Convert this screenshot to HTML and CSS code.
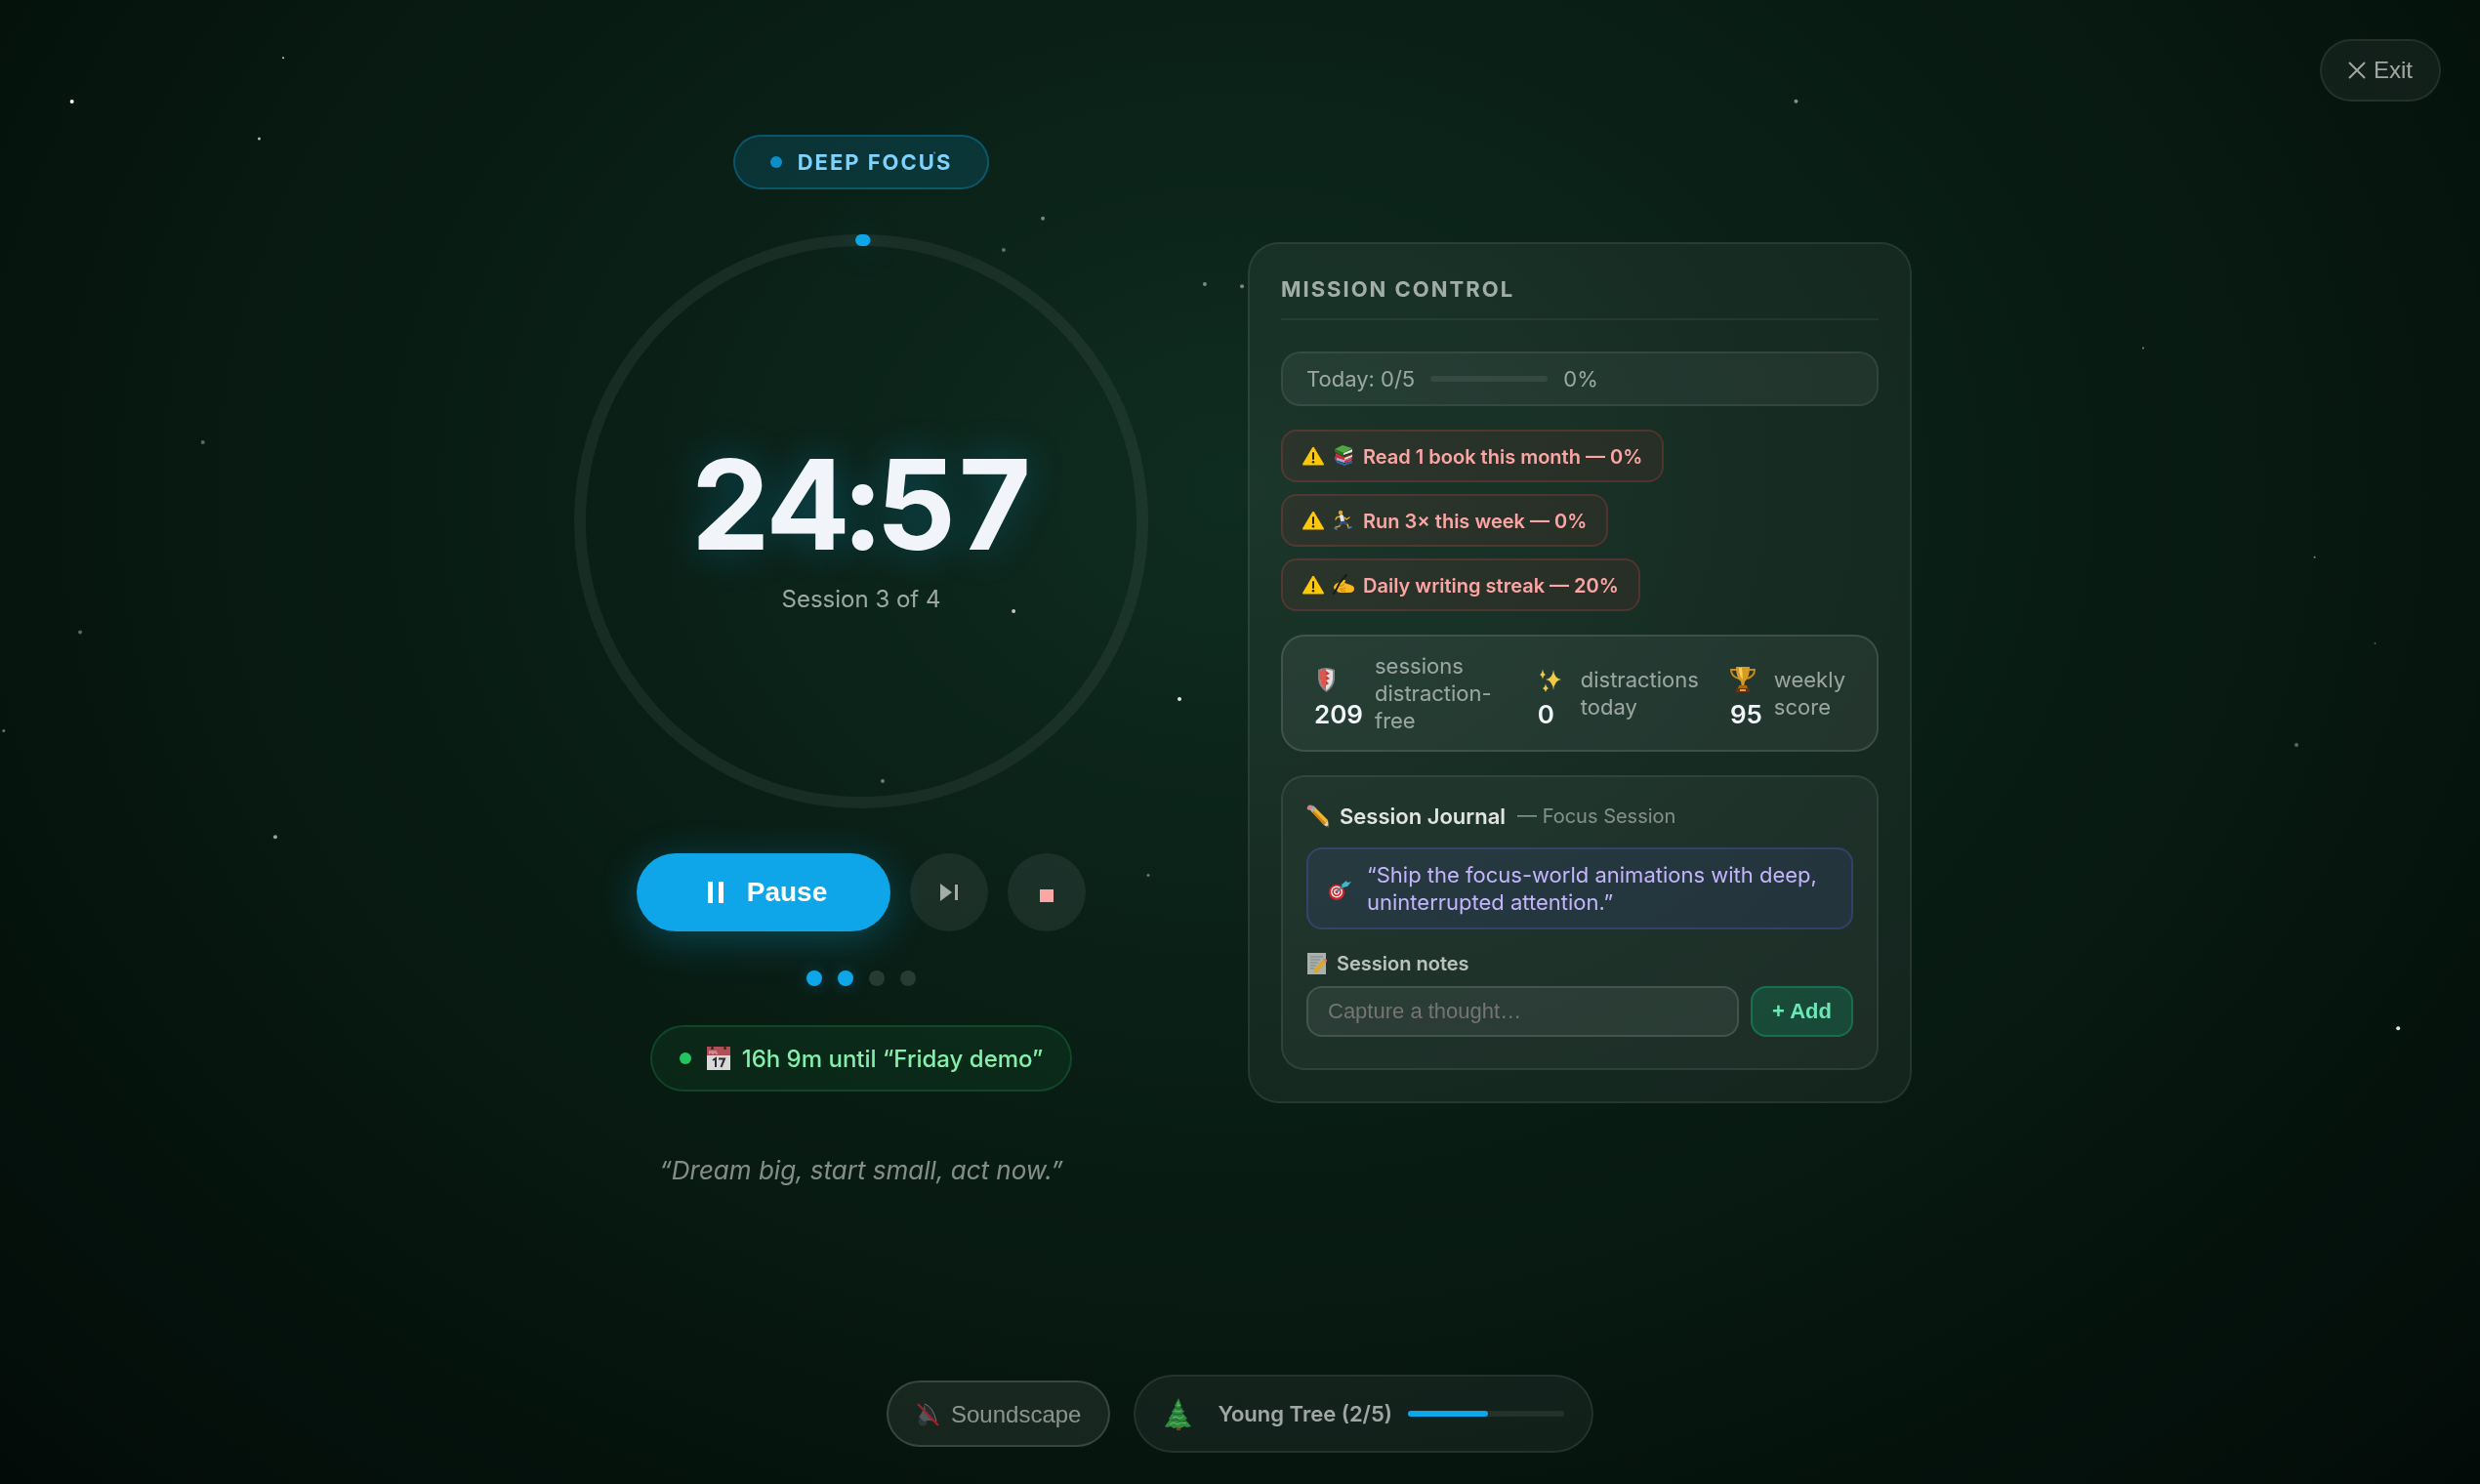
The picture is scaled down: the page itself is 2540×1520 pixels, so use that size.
FILE: index.html
```html
<!DOCTYPE html>
<html lang="en">
<head>
<meta charset="UTF-8" />
<meta name="viewport" content="width=device-width, initial-scale=1.0">
<title>Deep Focus</title>
<link rel="stylesheet" href="styles.css">
</head>
<body>

<svg class="stars" aria-hidden="true">
  <g fill="#fff">
    <circle cx="2.9%" cy="6.85%" r="2" />
    <circle cx="11.42%" cy="3.9%" r="1" opacity=".8" />
    <circle cx="10.45%" cy="9.35%" r="1.5" opacity=".7" />
    <circle cx="8.18%" cy="29.8%" r="2" opacity=".35" />
    <circle cx="3.23%" cy="42.6%" r="2" opacity=".35" />
    <circle cx=".15%" cy="49.25%" r="1.5" opacity=".4" />
    <circle cx="11.1%" cy="56.4%" r="2" opacity=".6" />
    <circle cx="37.68%" cy="10.3%" r="1" opacity=".5" />
    <circle cx="42.05%" cy="14.72%" r="2" opacity=".45" />
    <circle cx="40.47%" cy="16.85%" r="2" opacity=".35" />
    <circle cx="48.58%" cy="19.15%" r="2" opacity=".45" />
    <circle cx="50.08%" cy="19.3%" r="2" opacity=".45" />
    <circle cx="72.42%" cy="6.83%" r="2" opacity=".5" />
    <circle cx="86.42%" cy="23.45%" r="1" opacity=".5" />
    <circle cx="93.33%" cy="37.55%" r="1" opacity=".5" />
    <circle cx="95.77%" cy="43.35%" r="1" opacity=".3" />
    <circle cx="92.6%" cy="50.2%" r="2" opacity=".35" />
    <circle cx="96.7%" cy="69.3%" r="2" opacity=".9" />
    <circle cx="47.56%" cy="47.1%" r="2" opacity=".9" />
    <circle cx="40.87%" cy="41.18%" r="2" opacity=".75" />
    <circle cx="35.59%" cy="52.63%" r="2" opacity=".4" />
    <circle cx="46.3%" cy="58.98%" r="1.5" opacity=".4" />
  </g>
</svg>

<button class="exit-btn" type="button">
  <svg width="18" height="18" viewBox="0 0 18 18" fill="none" stroke="currentColor" stroke-width="2" aria-hidden="true"><path d="M1 1l16 16M17 1L1 17" /></svg>
  Exit
</button>

<div class="world">
  <main class="stage">
    <section class="timer">
      <div class="mode"><span class="mode-dot"></span>DEEP FOCUS</div>

      <div class="ring">
        <svg class="ring-svg" viewBox="0 0 600 600" fill="none" stroke-width="12" aria-hidden="true">
          <circle class="ring-track" cx="300" cy="300" r="288" />
          <circle class="ring-value" cx="300" cy="300" r="288" stroke-linecap="round" stroke-dasharray="3.6 1900" transform="rotate(-90 300 300)" />
        </svg>
        <div class="ring-text">
          <div class="time">24:57</div>
          <div class="session">Session 3 of 4</div>
        </div>
      </div>

      <div class="controls">
        <button class="pause-btn" type="button">
          <svg width="16" height="22" viewBox="0 0 16 22" fill="currentColor" aria-hidden="true"><path d="M0 0h5v22H0zM11 0h5v22h-5z" /></svg>
          Pause
        </button>
        <button class="round-btn" type="button" aria-label="Skip">
          <svg width="20" height="18" viewBox="0 0 20 18" fill="currentColor" aria-hidden="true"><path d="M1 0l12 9-12 9zM16 1h3v16h-3z" /></svg>
        </button>
        <button class="round-btn stop" type="button" aria-label="Stop">
          <svg width="14" height="20" viewBox="0 0 14 20" fill="currentColor" aria-hidden="true"><path d="M0 7h14v13H0z" /></svg>
        </button>
      </div>

      <div class="dots">
        <span class="dot done"></span><span class="dot done"></span><span class="dot"></span><span class="dot"></span>
      </div>

      <div class="event">
        <span class="event-dot"></span>
        <svg width="24" height="24" viewBox="0 0 24 24" aria-hidden="true">
          <path fill="#d9d9da" d="M0 9h24v15H0z" /><path fill="#b04f57" d="M0 0h24v9H0z" />
          <circle cx="5.500" cy="1.500" r="1.500" fill="#3a2425" /><circle cx="18.500" cy="1.500" r="1.500" fill="#3a2425" />
          <path d="M2 7h1V4M5 4v3h2V4M9 4v3h2" stroke="#e9b5b8" fill="none" />
          <path d="M6 14l3-2v9M12 12.500h6l-3.500 8.500" stroke="#2b2d31" stroke-width="2" fill="none" />
        </svg>
        <span class="event-text">16h 9m until “Friday demo”</span>
      </div>

      <p class="motto">“Dream big, start small, act now.”</p>
    </section>

    <section class="panel">
      <h2 class="panel-title">MISSION CONTROL</h2>

      <div class="today">
        <span>Today: 0/5</span>
        <span class="today-bar"></span>
        <span>0%</span>
      </div>

      <ul class="goals">
        <li class="goal">
          <svg width="22" height="22" viewBox="0 0 22 22" aria-hidden="true"><g id="warn"><path fill="#fdc80c" d="M10 2.500q1-1.500 2 0l9.800 16.500q.5 1.500-1 1.500H1.200q-1.500 0-1-1.500z" /><path stroke="#2d2410" stroke-width="2" stroke-linecap="round" d="M11 8v6" /><circle cx="11" cy="17.300" r="1.300" fill="#2d2410" /></g></svg>
          <svg width="22" height="22" viewBox="0 0 22 22" aria-hidden="true">
            <path fill="#3263a5" d="M3 15l9 4 8-3v2l-8 3-8-3z" />
            <path fill="#b9a7c8" d="M2 12l10 3 7-2v3l-7 2-9-3z" /><path fill="#7d4b9a" d="M2 11l2 1v4l-2-1z" />
            <path fill="#c62f35" d="M3 8l9 4 8-3v1l-8 3v2l-9-3z" /><path fill="#ecdedd" d="M12 13l8-3v2l-8 3z" /><path fill="#c62f35" d="M12 16l8-3v2l-8 3z" />
            <path fill="#dbe3d3" d="M11 8l9-4v3l-9 3z" /><path fill="#4fa83f" d="M2 4l8-4 10 3-9 5z" /><path fill="#287625" d="M2 4l9 4v3L2 7z" />
          </svg>
          <span class="goal-text">Read 1 book this month — 0%</span>
        </li>
        <li class="goal">
          <svg width="22" height="22" viewBox="0 0 22 22" aria-hidden="true"><use href="#warn" /></svg>
          <svg width="22" height="22" viewBox="0 0 22 22" fill="none" stroke-linecap="round" stroke-linejoin="round" aria-hidden="true">
            <path stroke="#e9a921" stroke-width="1.500" d="M7 7L4 8l-1 2M12 8l2 2 3-2M11 13l4 2 1 3" />
            <path stroke="#d79a20" stroke-width="1.500" d="M8 14l-1 3-4 1" />
            <circle cx="8" cy="3" r="2.200" fill="#e5a71f" />
            <path stroke="#dfe3ea" stroke-width="4" d="M9 7l1 4" /><path stroke="#31527f" stroke-width="2.500" d="M10 13l-2 2M11 13l3 1" /><path stroke="#4b7fc9" stroke-width="1.500" d="M2 19l2 1M16 19l3-1" />
          </svg>
          <span class="goal-text">Run 3× this week — 0%</span>
        </li>
        <li class="goal">
          <svg width="22" height="22" viewBox="0 0 22 22" aria-hidden="true"><use href="#warn" /></svg>
          <svg width="22" height="22" viewBox="0 0 22 22" aria-hidden="true">
            <path fill="#f6b91e" d="M1 13q1-3 4-4l5-3q3-1 3 1l-1 2 6 2q4 1 4 4 0 4-5 4H8q-3 0-4-2-3-1-3-4z" />
            <path stroke="#c47c0d" stroke-width="1" fill="none" d="M7 12q3 1 5-2M7 15q4 1 6-1M8 17q3 1 5 0" />
            <path stroke="#17191d" stroke-width="2" stroke-linecap="round" d="M14 1L7 9l-3 6-3 5" fill="none" />
          </svg>
          <span class="goal-text">Daily writing streak — 20%</span>
        </li>
      </ul>

      <div class="stats">
        <div class="stat">
          <div class="stat-value">
            <svg width="26" height="28" viewBox="0 0 26 28" aria-hidden="true">
              <path fill="#7f8688" d="M4 4q8-4 17 0v10q-1 8-8.500 13Q5 22 4 14z" /><path fill="#dfe1e1" d="M6 5q6-3 13 0v9q-1 7-6.500 11Q7 21 6 14z" /><path fill="#d9584e" d="M6 5q3-2 6-2v22q-5-4-6-11z" />
              <path fill="#c93b36" d="M12 5l4 3-4 2 4 3-4 2 3 3-3 2z" />
            </svg>
            <strong>209</strong>
          </div>
          <span class="stat-label">sessions distraction-free</span>
        </div>
        <div class="stat">
          <div class="stat-value">
            <svg width="26" height="28" viewBox="0 0 26 28" fill="#f0cb45" aria-hidden="true"><path d="M16 4q1 9 8 10-7 1-8 11-1-10-8-11 7-1 8-10zM5 3q.5 5 3 6-2.500 1-3 5-.5-4-3-5 2.500-1 3-6zM8 18q.5 4 3 5-2.500 1-3 4-.5-3-3-4 2.500-1 3-5z" /></svg>
            <strong>0</strong>
          </div>
          <span class="stat-label">distractions today</span>
        </div>
        <div class="stat">
          <div class="stat-value">
            <svg width="26" height="28" viewBox="0 0 26 28" aria-hidden="true">
              <path fill="none" stroke="#c98a1c" stroke-width="2" d="M7 4H1q0 7 8 9M19 4h6q0 7-8 9" />
              <path fill="#d99a20" d="M6 1h14q0 11-5 15l-1 6h-2l-1-6Q6 12 6 1z" /><path fill="#f4cf62" d="M9 2h3l1 12Q9 10 9 2z" /><path fill="#a8690f" d="M9 20h8l1 3H8z" />
              <path fill="#6e2f17" d="M6 23h14v4H6z" /><path fill="#d8a346" d="M10 24h6v2h-6z" />
            </svg>
            <strong>95</strong>
          </div>
          <span class="stat-label">weekly score</span>
        </div>
      </div>

      <div class="journal">
        <div class="journal-head">
          <svg width="24" height="24" viewBox="0 0 24 24" aria-hidden="true">
            <path fill="#f2b52a" d="M5 7l4-4 13 13-4 5z" /><path fill="#cc8613" d="M5 7l1.500-1.500L20 19l-2 2z" /><path fill="#a5adb5" d="M3 5l4-4 3 3-4 4z" /><path fill="#de7e7e" d="M1 5q-1-2 1-4 2-1 4 0l1 1-4 4z" /><path fill="#e8cf9c" d="M22 16l1 8-5-3z" /><path fill="#333" d="M22.500 21l.5 3-2.500-1z" />
          </svg>
          <h3 class="journal-title">Session Journal</h3>
          <span class="journal-sub">— Focus Session</span>
        </div>

        <div class="intent">
          <svg width="24" height="24" viewBox="0 0 24 24" aria-hidden="true">
            <circle cx="9" cy="16" r="8" fill="#d3232b" /><circle cx="9" cy="15.500" r="6" fill="#f3e9e6" /><circle cx="9" cy="15.500" r="4.500" fill="#d3232b" /><circle cx="9" cy="15.500" r="3" fill="#f3e9e6" /><circle cx="9" cy="15.500" r="1.500" fill="#d3232b" />
            <path stroke="#2b8fa0" stroke-width="2" d="M9 15l8-6" /><path fill="#46b5c4" d="M14 8l5-4 1 2 4-1-4 5-5 1z" />
          </svg>
          <span>“Ship the focus-world animations with deep, uninterrupted attention.”</span>
        </div>

        <label class="notes-label" for="note">
          <svg width="22" height="24" viewBox="0 0 22 24" aria-hidden="true">
            <path fill="#a9b0ae" d="M1 1h19v22H1z" /><path stroke="#7e8786" d="M4 5h13M4 8h10M4 11h8M4 14h6M4 17h4" /><path fill="#dba62c" d="M17 8l3 3-9 10-4 1 1-4z" /><path fill="#cf7d84" d="M17 8q2-2 4 0 0 2-1 3z" />
          </svg>
          Session notes
        </label>
        <form class="notes-row">
          <input class="note-input" id="note" type="text" placeholder="Capture a thought…">
          <button class="add-btn" type="button">+ Add</button>
        </form>
      </div>
    </section>
  </main>

  <footer class="dock">
    <button class="sound-btn" type="button">
      <svg width="24" height="24" viewBox="0 0 24 24" aria-hidden="true">
        <circle cx="7" cy="19" r="4.500" fill="#2f3637" />
        <path fill="#4f5859" d="M3 14q4-4 6-13 8 3 12 18-6-1-9-1l-4 1z" /><path fill="#262d2f" d="M9 1q9 3 12 18-4 0-8-5T9 1z" /><path stroke="#6b7475" fill="none" d="M9 1q9 3 12 18" /><path stroke="#a91f27" stroke-width="2" d="M2 1l21 22" />
      </svg>
      Soundscape
    </button>
    <div class="tree">
      <svg width="28" height="34" viewBox="0 0 28 34" aria-hidden="true">
        <path fill="#7d3d22" d="M12 29h4v5h-4z" />
        <path fill="#2f8b3d" d="M14 1l3 8-1 1 4 5-2 1 5 6-2 1 6 7-4 1-3-1-4 2-3-1-4 1-3-2-4 1-2-1 5-7-1-1 4-6-1-1 4-5-1-1z" />
        <path stroke="#5cc05f" stroke-width="1" fill="none" d="M14 5l-1 4 3-1M10 14l4 1 3-1M8 21l4-1 3 2 4-2M5 28l4-2 4 2 4-2 5 1" /><path stroke="#1d6130" stroke-width="1" fill="none" d="M11 11l4 1 3-1M8 17l5 1 6-1M6 24l6-1 4 2 6-1" />
      </svg>
      <span class="tree-name">Young Tree (2/5)</span>
      <span class="tree-bar"><span class="tree-fill" style="width: 51%"></span></span>
    </div>
  </footer>
</div>

</body>
</html>
```

FILE: styles.css
```css
* { box-sizing: border-box; }

body {
  margin: 0;
  color: #f1f5f9;
  font-family: Inter, "Noto Sans", sans-serif;
  font-size: 22px;
  line-height: 28px;
  background: radial-gradient(ellipse at 50% 33%, #0f2c20 0%, #0a2017 34%, #071810 62%, #030b08 100%) #030b08;
}

h2, h3, p, ul { margin: 0; padding: 0; }
svg { flex: none; display: block; }
button, input { font-family: "Liberation Sans", Arial, sans-serif; }
button { cursor: pointer; }

.stars {
  position: fixed;
  inset: 0;
  width: 100%;
  height: 100%;
  pointer-events: none;
}

.world {
  position: relative;
  display: flex;
  flex-direction: column;
  min-height: 100vh;
}

.exit-btn {
  position: fixed;
  z-index: 2;
  top: 40px;
  right: 40px;
  display: flex;
  align-items: center;
  gap: 8px;
  height: 64px;
  padding: 0 27px;
  border: 2px solid rgba(255,255,255,0.08);
  border-radius: 32px;
  background: rgba(255,255,255,0.05);
  color: rgba(255,255,255,0.6);
  font-size: 24px;
}

.stage {
  flex: 1;
  display: flex;
  align-items: center;
  justify-content: center;
  gap: 96px;
}

/* timer column */
.timer {
  display: flex;
  flex-direction: column;
  align-items: center;
  gap: 40px;
}
.mode {
  display: flex;
  align-items: center;
  gap: 16px;
  height: 56px;
  padding: 0 36px;
  border: 2px solid rgba(14,165,233,0.3);
  border-radius: 28px;
  background: rgba(14,165,233,0.15);
  color: #7dd3fc;
  font-weight: 700;
  letter-spacing: 2px;
}
.mode-dot {
  width: 12px;
  height: 12px;
  border-radius: 50%;
  background: #0f8dc7;
}

.ring { position: relative; width: 600px; height: 600px; }
.ring-svg { width: 100%; height: 100%; overflow: visible; }
.ring-track { stroke: rgba(255,255,255,0.06); }
.ring-value { stroke: #0ea5e9; filter: drop-shadow(0 0 16px rgba(14,165,233,0.3)); }
.ring-text {
  position: absolute;
  inset: 0;
  display: flex;
  flex-direction: column;
  align-items: center;
  justify-content: center;
  gap: 4px;
}
.time {
  font-size: 128px;
  line-height: 156px;
  font-weight: 700;
  letter-spacing: -3px;
  font-variant-numeric: tabular-nums;
  text-shadow: 0 0 40px rgba(14,165,233,0.3);
}
.session {
  font-size: 24px;
  line-height: 30px;
  color: rgba(255,255,255,0.6);
}

.controls { display: flex; gap: 20px; }
.pause-btn {
  display: flex;
  align-items: center;
  justify-content: center;
  gap: 24px;
  width: 260px;
  height: 80px;
  padding: 0 0 0 8px;
  border: 0;
  border-radius: 40px;
  background: #0ea5e9;
  box-shadow: 0 8px 40px rgba(14,165,233,0.3);
  color: #fff;
  font-size: 28px;
  font-weight: 700;
}
.round-btn {
  display: flex;
  align-items: center;
  justify-content: center;
  width: 80px;
  height: 80px;
  border: 0;
  border-radius: 50%;
  background: rgba(255,255,255,0.07);
  color: rgba(255,255,255,0.6);
}
.round-btn.stop { color: #fca5a5; }

.dots { display: flex; gap: 16px; }
.dot {
  width: 16px;
  height: 16px;
  border-radius: 50%;
  background: rgba(255,255,255,0.13);
}
.dot.done { background: #0ea5e9; box-shadow: 0 0 16px rgba(14,165,233,0.3); }

.event {
  display: flex;
  align-items: center;
  gap: 16px;
  height: 68px;
  padding: 0 28px;
  border: 2px solid rgba(34,197,94,0.2);
  border-radius: 34px;
  background: rgba(34,197,94,0.08);
  color: #86efac;
  font-size: 24px;
  line-height: 30px;
  font-weight: 500;
}
.event-dot { width: 12px; height: 12px; border-radius: 50%; background: #22c55e; }
.event-text { margin-left: -4px; padding-top: 2px; }

.motto {
  padding: 24px 0;
  font-size: 26px;
  line-height: 34px;
  font-style: italic;
  color: rgba(255,255,255,0.5);
}

/* mission control */
.panel {
  width: 680px;
  padding: 32px;
  border: 2px solid rgba(255,255,255,0.08);
  border-radius: 32px;
  background: rgba(255,255,255,0.05);
}
.panel-title {
  margin-bottom: 32px;
  padding-bottom: 16px;
  border-bottom: 2px solid rgba(255,255,255,0.06);
  color: rgba(255,255,255,0.6);
  font-size: 22px;
  font-weight: 700;
  letter-spacing: 2px;
}

.today {
  display: flex;
  align-items: center;
  gap: 16px;
  height: 56px;
  padding: 0 24px;
  border: 2px solid rgba(255,255,255,0.08);
  border-radius: 20px;
  background: rgba(255,255,255,0.05);
  color: rgba(255,255,255,0.55);
}
.today-bar { width: 120px; height: 6px; border-radius: 3px; background: rgba(255,255,255,0.08); }

.goals {
  display: flex;
  flex-direction: column;
  align-items: flex-start;
  gap: 12px;
  margin: 24px 0;
  list-style: none;
}
.goal {
  display: flex;
  align-items: center;
  gap: 9px;
  height: 54px;
  padding: 0 20px;
  border: 2px solid rgba(239,68,68,0.2);
  border-radius: 16px;
  background: rgba(239,68,68,0.08);
  color: #fca5a5;
  font-size: 20px;
  font-weight: 600;
}
.goal-text { padding-top: 2px; }

.stats {
  display: flex;
  align-items: center;
  gap: 32px;
  height: 120px;
  padding: 0 32px;
  border: 2px solid rgba(255,255,255,0.12);
  border-radius: 24px;
  background: rgba(255,255,255,0.06);
}
.stat { display: flex; align-items: center; gap: 12px; }
.stat:first-child { flex: 1; }
.stat-value { min-width: 32px; padding-top: 16px; }
.stat-value strong {
  display: block;
  font-size: 26px;
  line-height: 44px;
  font-weight: 600;
}
.stat-label { width: min-content; color: rgba(255,255,255,0.55); }

.journal {
  margin-top: 24px;
  padding: 24px 24px 32px;
  border: 2px solid rgba(255,255,255,0.08);
  border-radius: 24px;
  background: rgba(255,255,255,0.04);
}
.journal-head {
  display: flex;
  align-items: center;
  margin-bottom: 16px;
  line-height: 32px;
}
.journal-title { margin: 0 12px 0 10px; font-size: 22px; font-weight: 600; color: rgba(255,255,255,0.87); }
.journal-sub { font-size: 20px; color: rgba(255,255,255,0.45); }
.intent {
  display: flex;
  align-items: center;
  gap: 16px;
  padding: 12px 20px;
  border: 2px solid rgba(99,102,241,0.25);
  border-radius: 16px;
  background: rgba(99,102,241,0.1);
  color: #c4b5fd;
}
.notes-label {
  display: flex;
  align-items: center;
  gap: 9px;
  margin: 20px 0 8px;
  font-size: 20px;
  line-height: 30px;
  font-weight: 600;
  color: rgba(255,255,255,0.7);
}
.notes-row { display: flex; gap: 12px; }
.note-input {
  flex: 1;
  min-width: 0;
  height: 52px;
  padding: 0 20px;
  border: 2px solid rgba(255,255,255,0.12);
  border-radius: 16px;
  background: rgba(255,255,255,0.06);
  color: #fff;
  font-size: 22px;
}
.note-input::placeholder { color: #757575; }
.add-btn {
  height: 52px;
  padding: 0 20px;
  border: 2px solid rgba(16,185,129,0.35);
  border-radius: 16px;
  background: rgba(16,185,129,0.2);
  color: #6ee7b7;
  font-size: 22px;
  font-weight: 700;
}

/* bottom dock */
.dock {
  display: flex;
  align-items: center;
  justify-content: center;
  gap: 24px;
  padding: 30px 0 32px;
}
.sound-btn {
  display: flex;
  align-items: center;
  gap: 12px;
  height: 68px;
  padding: 2px 28px 0;
  border: 2px solid rgba(255,255,255,0.15);
  border-radius: 34px;
  background: rgba(255,255,255,0.07);
  color: rgba(255,255,255,0.5);
  font-size: 24px;
}
.tree {
  display: flex;
  align-items: center;
  height: 80px;
  padding: 0 28px 0 30px;
  border: 2px solid rgba(255,255,255,0.08);
  border-radius: 40px;
  background: rgba(255,255,255,0.05);
}
.tree-name { margin: 0 16px 0 26px; font-weight: 600; color: rgba(255,255,255,0.6); }
.tree-bar { width: 160px; height: 6px; border-radius: 3px; background: rgba(255,255,255,0.08); }
.tree-fill { display: block; height: 100%; border-radius: 3px; background: #0ea5e9; }
```
